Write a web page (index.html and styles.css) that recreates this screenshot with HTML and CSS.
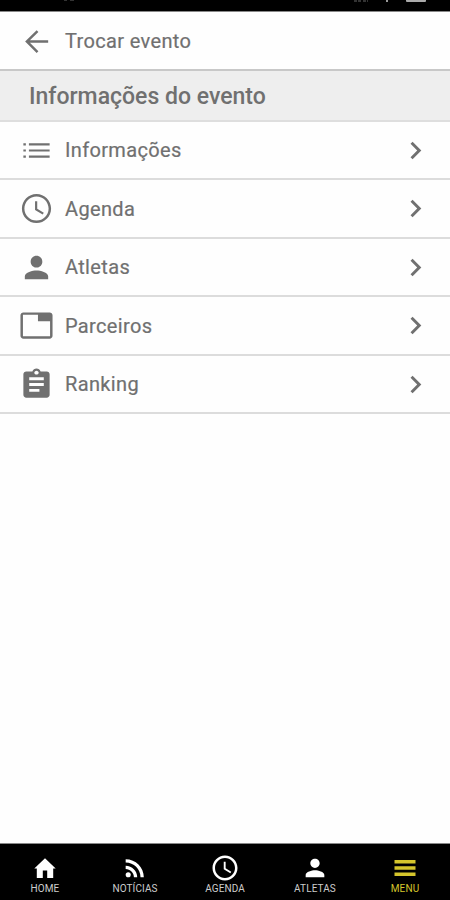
FILE: index.html
```html
<!DOCTYPE html>
<html lang="pt-BR">
<head>
    <meta charset="UTF-8">
    <meta name="viewport" content="width=device-width, initial-scale=1.0">
    <title>Menu</title>
    <link rel="stylesheet" href="styles.css">
</head>
<body>
    <div class="app">
        <div class="status-bar">
            <svg width="450" height="11" viewBox="0 0 450 11">
                <path d="M64 0h3M70 0h4" stroke="#333" stroke-width="2"/>
                <path d="M354 1h7M363 1h5" stroke="#444" stroke-width="1.5" stroke-dasharray="3 1"/>
                <path d="M387 0v2" stroke="#999" stroke-width="2"/>
                <path d="M406 0h20v1q0 1-1 1h-18q-1 0-1-1z" fill="#aaa"/>
            </svg>
        </div>

        <div class="back">
            <svg class="icon" viewBox="0 0 24 24"><path d="M20 11.200H7.500l5.800-5.800L12.100 4.200 4.200 12l7.900 7.800 1.200-1.200-5.800-5.800H20z"/></svg>
            <span>Trocar evento</span>
        </div>

        <h2 class="title">Informações do evento</h2>

        <ul class="menu">
            <li>
                <svg class="icon" viewBox="0 0 24 24"><path d="M3 7h1.700v1.500H3zM3 11.250h1.700v1.500H3zM3 15.500h1.700V17H3zM6.800 7H21v1.500H6.800zM6.800 11.250H21v1.500H6.800zM6.800 15.500H21V17H6.800z"/></svg>
                <span>Informações</span>
                <svg class="icon chevron" viewBox="0 0 24 24"><path d="M10 6L8.590 7.410 13.170 12l-4.580 4.590L10 18l6-6z"/></svg>
            </li>
            <li>
                <svg class="icon" viewBox="0 0 24 24"><path d="M11.990 2C6.470 2 2 6.480 2 12s4.470 10 9.990 10C17.520 22 22 17.520 22 12S17.520 2 11.990 2zM12 20.300c-4.600 0-8.300-3.700-8.300-8.300s3.700-8.300 8.300-8.300 8.300 3.700 8.300 8.300-3.700 8.300-8.300 8.300zM12.500 7H11v6l5.250 3.150.750-1.230-4.500-2.670z"/></svg>
                <span>Agenda</span>
                <svg class="icon chevron" viewBox="0 0 24 24"><path d="M10 6L8.590 7.410 13.170 12l-4.580 4.590L10 18l6-6z"/></svg>
            </li>
            <li>
                <svg class="icon" viewBox="0 0 24 24"><path d="M12 12c2.210 0 4-1.790 4-4s-1.790-4-4-4-4 1.790-4 4 1.790 4 4 4zm0 2c-2.670 0-8 1.340-8 4v2h16v-2c0-2.660-5.330-4-8-4z"/></svg>
                <span>Atletas</span>
                <svg class="icon chevron" viewBox="0 0 24 24"><path d="M10 6L8.590 7.410 13.170 12l-4.580 4.590L10 18l6-6z"/></svg>
            </li>
            <li>
                <svg class="icon" viewBox="0 0 24 24"><path d="M21 3H3c-1.100 0-2 .900-2 2v14c0 1.100.900 2 2 2h18c1.100 0 2-.900 2-2V5c0-1.100-.900-2-2-2zm.300 16.300H2.700V4.700H13V9h8.300v10.300z"/></svg>
                <span>Parceiros</span>
                <svg class="icon chevron" viewBox="0 0 24 24"><path d="M10 6L8.590 7.410 13.170 12l-4.580 4.590L10 18l6-6z"/></svg>
            </li>
            <li>
                <svg class="icon" viewBox="0 0 24 24"><path d="M19 3h-4.180C14.400 1.840 13.300 1 12 1c-1.300 0-2.400.840-2.820 2H5c-1.100 0-2 .900-2 2v14c0 1.100.900 2 2 2h14c1.100 0 2-.900 2-2V5c0-1.100-.900-2-2-2zm-7-.500c.830 0 1.500.670 1.500 1.500s-.670 1.200-1.500 1.200-1.500-.370-1.500-1.200.670-1.500 1.500-1.500zM14 17H7v-2h7v2zm3-4H7v-2h10v2zm0-4H7V7h10v2z"/></svg>
                <span>Ranking</span>
                <svg class="icon chevron" viewBox="0 0 24 24"><path d="M10 6L8.590 7.410 13.170 12l-4.580 4.590L10 18l6-6z"/></svg>
            </li>
        </ul>

        <nav class="tabs">
            <a>
                <svg viewBox="0 0 28 28"><path d="M14 4.200L3.300 14.500h2.500V24h6v-7.500h4.400V24h6v-9.500h2.500z"/></svg>
                <span>HOME</span>
            </a>
            <a>
                <svg viewBox="0 0 24 24"><circle cx="6.180" cy="17.820" r="2.180"/><path d="M4 4.440v2.830c7.030 0 12.730 5.700 12.730 12.730h2.830c0-8.590-6.970-15.560-15.560-15.560zm0 5.660v2.830c3.900 0 7.070 3.170 7.070 7.070h2.830c0-5.470-4.430-9.900-9.900-9.900z"/></svg>
                <span>NOTÍCIAS</span>
            </a>
            <a>
                <svg class="clock" viewBox="0 0 24 24"><path d="M11.990 2C6.470 2 2 6.480 2 12s4.470 10 9.990 10C17.520 22 22 17.520 22 12S17.520 2 11.990 2zM12 20c-4.420 0-8-3.580-8-8s3.580-8 8-8 8 3.580 8 8-3.580 8-8 8zm.500-13H11v6l5.250 3.150.750-1.230-4.500-2.670z"/></svg>
                <span>AGENDA</span>
            </a>
            <a>
                <svg viewBox="0 0 24 24"><path d="M12 12c2.210 0 4-1.790 4-4s-1.790-4-4-4-4 1.790-4 4 1.790 4 4 4zm0 2c-2.670 0-8 1.340-8 4v2h16v-2c0-2.660-5.330-4-8-4z"/></svg>
                <span>ATLETAS</span>
            </a>
            <a class="active">
                <svg viewBox="0 0 28 28"><path d="M3.500 6h21v3.500h-21zM3.500 12.200h21v3.500h-21zM3.500 18.500h21V22h-21z"/></svg>
                <span>MENU</span>
            </a>
        </nav>
    </div>
</body>
</html>
```

FILE: styles.css
```css
* {
    box-sizing: border-box;
}
body {
    margin: 0;
    font-family: Roboto, sans-serif;
    color: #707070;
    background-color: #fefefe;
}
.app {
    display: flex;
    flex-direction: column;
    height: 100vh;
    overflow: hidden;
}
.status-bar {
    height: 12px;
    background-color: #000;
    border-bottom: 1px solid #888;
}
.status-bar svg {
    display: block;
}
.icon {
    width: 35px;
    height: 35px;
    flex-shrink: 0;
    fill: #707070;
}
.back,
.menu li {
    display: flex;
    align-items: center;
    padding: 1px 17.5px 0 18.5px;
    font-size: 20px;
    letter-spacing: 0.35px;
    -webkit-text-stroke: 0.2px #707070;
}
.back span,
.menu span {
    margin-left: 11.5px;
}
.back {
    height: 57px;
}
.title {
    height: 52.5px;
    margin: 0;
    padding-left: 29px;
    font-size: 23px;
    font-weight: 500;
    line-height: 51px;
    background-color: #eee;
    border-top: 2px solid #c8c8c8;
    border-bottom: 2px solid #dedede;
}
.menu {
    margin: 0;
    padding: 0;
    list-style-type: none;
}
.menu li {
    height: 58.5px;
    border-bottom: 2px solid #dcdcdc;
}
.menu .chevron {
    margin-left: auto;
}
.tabs {
    display: flex;
    height: 57px;
    margin-top: auto;
    background-color: #000;
    border-top: 1px solid #888;
}
.tabs a {
    flex: 1;
    display: flex;
    flex-direction: column;
    align-items: center;
    padding-top: 10px;
    font-size: 10px;
    line-height: 13px;
    letter-spacing: 0.1px;
    color: #ccc;
}
.tabs svg {
    width: 28px;
    height: 28px;
    fill: #fff;
}
.tabs .clock {
    width: 30px;
    height: 30px;
    margin: -1px 0;
}
.tabs .active {
    color: #d5c52c;
}
.tabs .active svg {
    fill: #d5c52c;
}
```
